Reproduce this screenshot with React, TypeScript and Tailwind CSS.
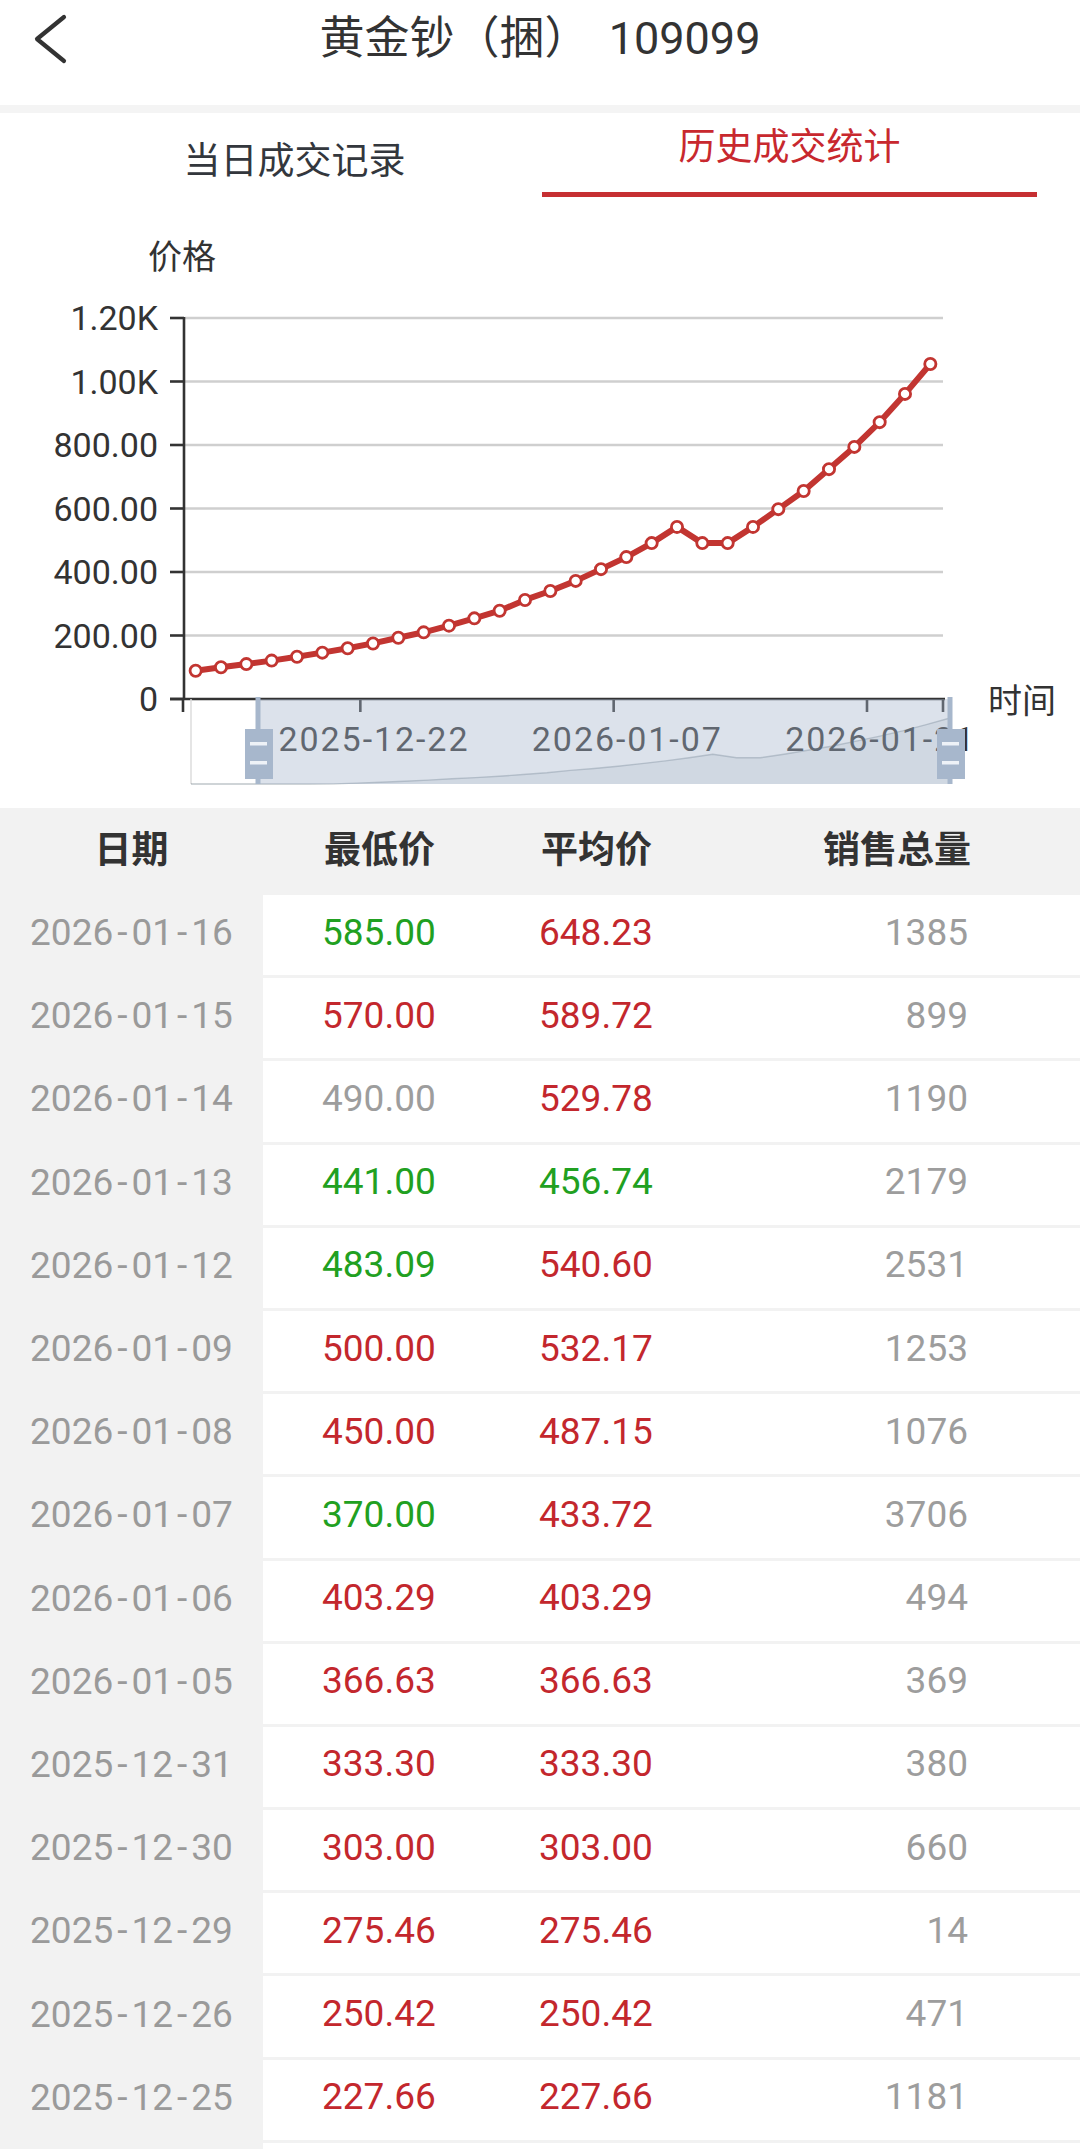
import React from "react";

const vals = [89,100,110,121,133,146,160,175,193,210,231,254,278,312,340,372,409,447,491,542,491,491,542,598,655,724,794,872,961,1055];
const X0 = 183;
const CW = 760 / 30;
const px = (i: number) => X0 + CW * (i + 0.5);
const py = (v: number) => 699 - v * (381 / 1200);

const shadowVals = [62, 70, 80, ...vals];
const sx = (gi: number) => 191 + (gi * 759) / (shadowVals.length - 1);
const sy = (v: number) => 784 - Math.max(0, v - 120) * 0.0706;

type Row = { d: string; lo: string; loC: string; av: string; avC: string; q: string };
const R = "text-[#c3272d]";
const G = "text-[#21a021]";
const N = "text-[#9d9d9d]";
const rows: Row[] = [
  { d: "2026-01-16", lo: "585.00", loC: G, av: "648.23", avC: R, q: "1385" },
  { d: "2026-01-15", lo: "570.00", loC: R, av: "589.72", avC: R, q: "899" },
  { d: "2026-01-14", lo: "490.00", loC: N, av: "529.78", avC: R, q: "1190" },
  { d: "2026-01-13", lo: "441.00", loC: G, av: "456.74", avC: G, q: "2179" },
  { d: "2026-01-12", lo: "483.09", loC: G, av: "540.60", avC: R, q: "2531" },
  { d: "2026-01-09", lo: "500.00", loC: R, av: "532.17", avC: R, q: "1253" },
  { d: "2026-01-08", lo: "450.00", loC: R, av: "487.15", avC: R, q: "1076" },
  { d: "2026-01-07", lo: "370.00", loC: G, av: "433.72", avC: R, q: "3706" },
  { d: "2026-01-06", lo: "403.29", loC: R, av: "403.29", avC: R, q: "494" },
  { d: "2026-01-05", lo: "366.63", loC: R, av: "366.63", avC: R, q: "369" },
  { d: "2025-12-31", lo: "333.30", loC: R, av: "333.30", avC: R, q: "380" },
  { d: "2025-12-30", lo: "303.00", loC: R, av: "303.00", avC: R, q: "660" },
  { d: "2025-12-29", lo: "275.46", loC: R, av: "275.46", avC: R, q: "14" },
  { d: "2025-12-26", lo: "250.42", loC: R, av: "250.42", avC: R, q: "471" },
  { d: "2025-12-25", lo: "227.66", loC: R, av: "227.66", avC: R, q: "1181" },
];

function DateText({ d }: { d: string }) {
  const parts = d.split("-");
  return (
    <span>
      {parts[0]}
      <span className="px-[4px]">-</span>
      {parts[1]}
      <span className="px-[4px]">-</span>
      {parts[2]}
    </span>
  );
}

function Handle({ x }: { x: number }) {
  return (
    <g>
      <rect x={x - 2.5} y={697} width={5} height={87} fill="#a7b7cc" />
      <rect x={x - 13} y={729} width={28} height={50} fill="#a7b7cc" />
      <rect x={x - 8} y={742} width={17} height={3.5} fill="#eef2f7" />
      <rect x={x - 8} y={761} width={17} height={3.5} fill="#eef2f7" />
    </g>
  );
}

function Chart() {
  const grid = [200, 400, 600, 800, 1000, 1200];
  const ylabels: [number, string][] = [
    [0, "0"],
    [200, "200.00"],
    [400, "400.00"],
    [600, "600.00"],
    [800, "800.00"],
    [1000, "1.00K"],
    [1200, "1.20K"],
  ];
  const line = vals.map((v, i) => `${px(i).toFixed(1)},${py(v).toFixed(1)}`).join(" ");
  const shadowLine = shadowVals.map((v, i) => `${sx(i).toFixed(1)},${sy(v).toFixed(1)}`).join(" ");
  const shadowArea = `${sx(0)},784 ${shadowLine} ${sx(shadowVals.length - 1)},784`;
  const xticks = [0, 7, 17, 27, 30];
  const xlabels: [number, string][] = [
    [7, "2025-12-22"],
    [17, "2026-01-07"],
    [27, "2026-01-21"],
  ];
  return (
    <svg width={1080} height={611} viewBox="0 197 1080 611" className="block">
      <text x={148} y={254} fontSize={34} fill="#333" dominantBaseline="central" fontFamily="'Noto Sans CJK SC', sans-serif">
        价格
      </text>
      {grid.map((g) => (
        <line key={g} x1={185} x2={943} y1={py(g)} y2={py(g)} stroke="#cfcfcf" strokeWidth={2.6} />
      ))}
      <line x1={184} x2={184} y1={317} y2={700} stroke="#333" strokeWidth={2.6} />
      {ylabels.map(([v, t]) => (
        <g key={t}>
          <line x1={170} x2={184} y1={py(v)} y2={py(v)} stroke="#333" strokeWidth={2.6} />
          <text x={158} y={py(v)} fontSize={34} fill="#333" textAnchor="end" dominantBaseline="central" fontFamily="Roboto, sans-serif">
            {t}
          </text>
        </g>
      ))}
      <line x1={170} x2={945} y1={699} y2={699} stroke="#333" strokeWidth={2.6} />
      {xticks.map((k) => (
        <line key={k} x1={X0 + CW * k} x2={X0 + CW * k} y1={699} y2={712} stroke="#333" strokeWidth={2.6} />
      ))}
      {xlabels.map(([i, t]) => (
        <text key={t} x={px(i)} y={739} fontSize={34} fill="#333" textAnchor="middle" dominantBaseline="central" fontFamily="Roboto, sans-serif" textLength={189} lengthAdjust="spacing">
          {t}
        </text>
      ))}
      <text x={988} y={698} fontSize={34} fill="#333" dominantBaseline="central" fontFamily="'Noto Sans CJK SC', sans-serif">
        时间
      </text>
      <polyline points={line} fill="none" stroke="#c23531" strokeWidth={6} strokeLinejoin="round" strokeLinecap="round" />
      {vals.map((v, i) => (
        <circle key={i} cx={px(i)} cy={py(v)} r={5.6} fill="#fff" stroke="#c23531" strokeWidth={2.8} />
      ))}
      {/* data zoom */}
      <line x1={191} x2={191} y1={699} y2={784} stroke="#dddddd" strokeWidth={1.5} />
      <polygon points={shadowArea} fill="rgba(47,69,84,0.09)" />
      <polyline points={shadowLine} fill="none" stroke="rgba(47,69,84,0.3)" strokeWidth={1.4} />
      <rect x={258} y={699} width={692} height={85} fill="rgba(167,183,204,0.4)" />
      <Handle x={258} />
      <Handle x={950} />
    </svg>
  );
}

export default function App() {
  return (
    <div className="w-[1080px] h-[2149px] overflow-hidden bg-white font-['Roboto','Noto_Sans_CJK_SC',sans-serif]">
      <header className="h-[105px] grid grid-cols-[1fr_auto_1fr] items-start">
        <div className="pt-[14px] pl-[34px]">
          <svg width={34} height={52} viewBox="0 0 34 52">
            <polyline points="30,3 3,25 30,47" fill="none" stroke="#333" strokeWidth={4.2} strokeLinecap="round" strokeLinejoin="round" />
          </svg>
        </div>
        <h1 className="mt-[14px] text-[45px] leading-[50px] text-[#333] font-normal whitespace-pre">
          黄金钞（捆）<span className="pl-[8px]"> 109099</span>
        </h1>
        <div />
      </header>
      <div className="h-[8px] bg-[#f4f4f4]" />
      <nav className="h-[84px] flex pl-[47px]">
        <div className="w-[495px] flex justify-center">
          <span className="mt-[30px] text-[37px] leading-[37px] text-[#33373d]">当日成交记录</span>
        </div>
        <div className="w-[495px] flex flex-col items-center">
          <span className="mt-[16px] text-[37px] leading-[37px] text-[#c8282e]">历史成交统计</span>
          <div className="mt-auto h-[5px] w-full bg-[#c62f32]" />
        </div>
      </nav>
      <Chart />
      <div className="h-[84px] bg-[#f2f2f2] grid grid-cols-[263px_217px_217px_1fr] items-center text-[37px] leading-none font-bold text-[#333]">
        <div className="text-center">日期</div>
        <div className="pl-[61px]">最低价</div>
        <div className="pl-[61px]">平均价</div>
        <div className="text-right pr-[109px]">销售总量</div>
      </div>
      {rows.map((r) => (
        <div key={r.d} className="h-[83.2px] grid grid-cols-[263px_217px_217px_1fr] text-[37px] leading-none">
          <div className="bg-[#f2f2f2] flex items-center justify-center text-[#9a9a9a] pb-[2px]">
            <DateText d={r.d} />
          </div>
          <div className={`border-t-[3px] border-[#f2f2f2] flex items-center pl-[59px] pb-[6px] ${r.loC}`}>{r.lo}</div>
          <div className={`border-t-[3px] border-[#f2f2f2] flex items-center pl-[59px] pb-[6px] ${r.avC}`}>{r.av}</div>
          <div className="border-t-[3px] border-[#f2f2f2] flex items-center justify-end pr-[112px] pb-[6px] text-[#9d9d9d]">{r.q}</div>
        </div>
      ))}
      <div className="h-[83.2px] grid grid-cols-[263px_1fr]">
        <div className="bg-[#f2f2f2]" />
        <div className="border-t-[3px] border-[#f2f2f2]" />
      </div>
    </div>
  );
}
